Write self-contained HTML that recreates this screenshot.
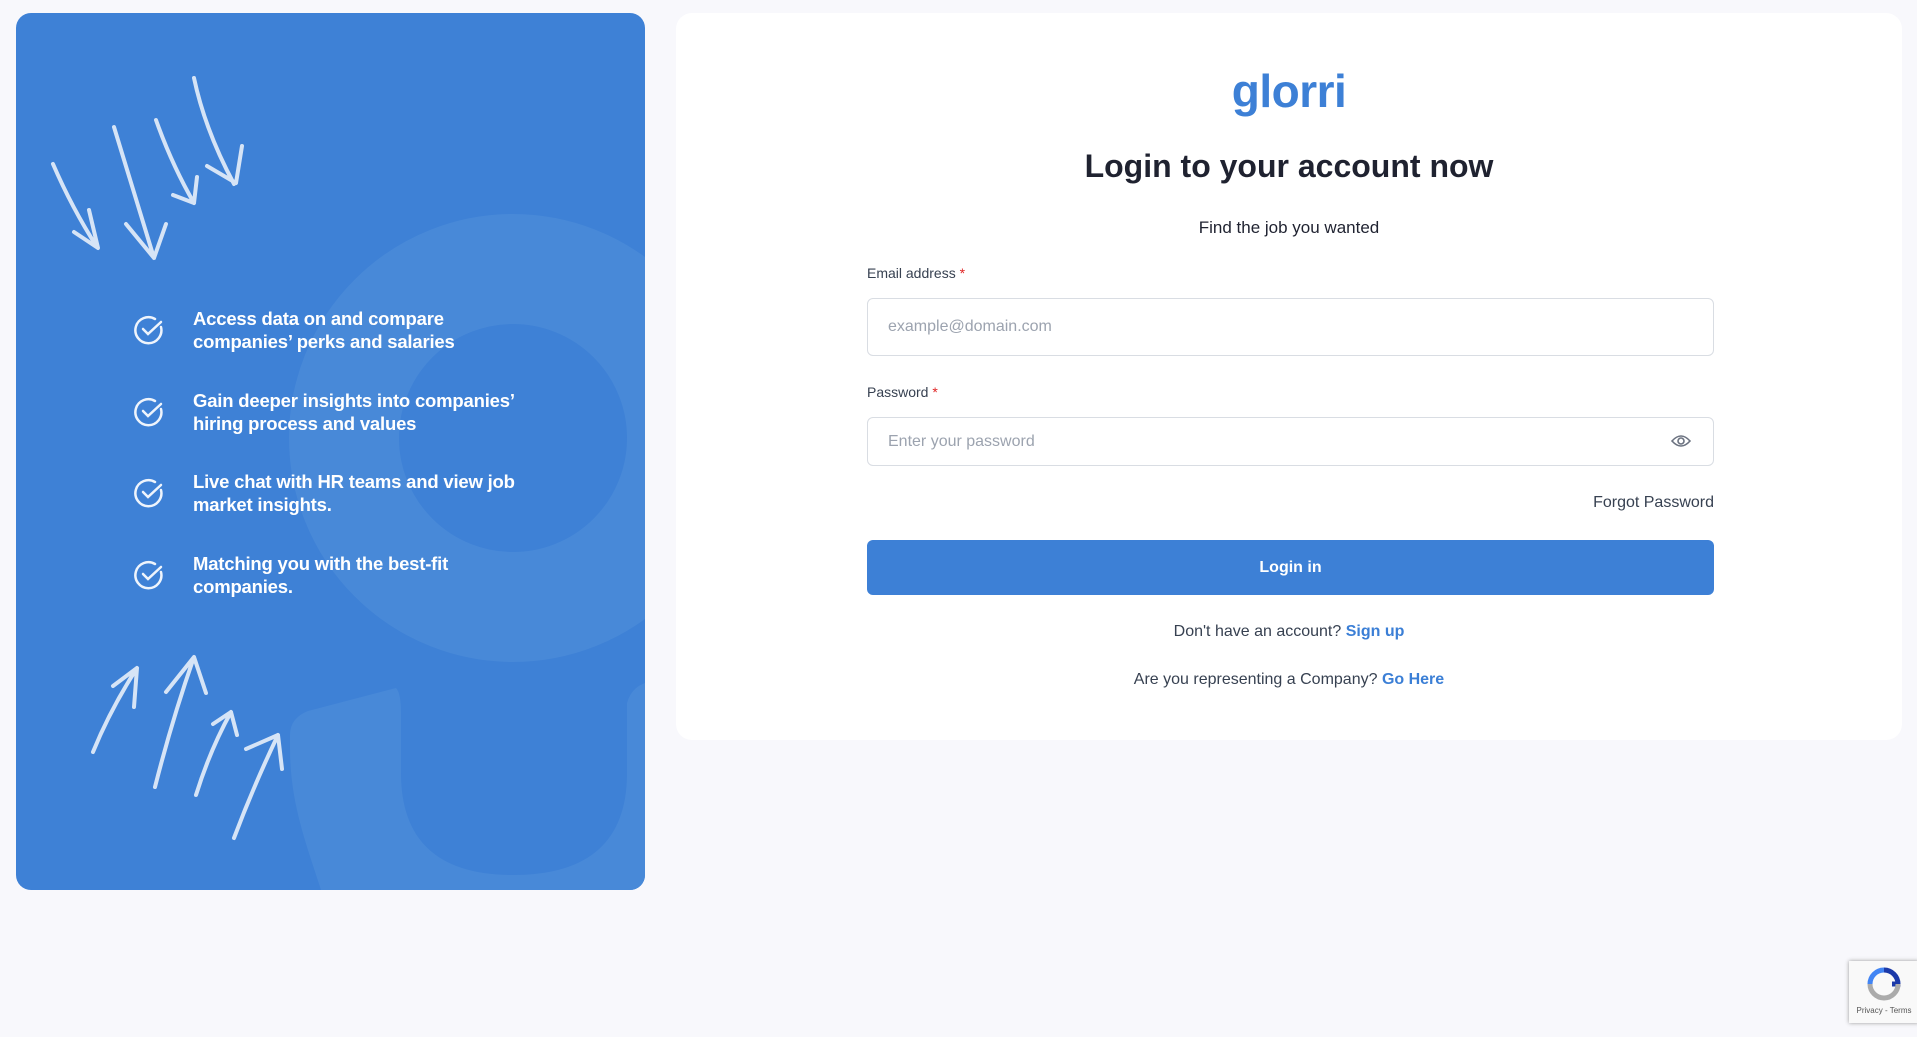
<!DOCTYPE html>
<html><head><meta charset="utf-8"><style>
*{box-sizing:border-box;margin:0;padding:0}
body{width:1917px;height:1037px;background:#f8f8fc;font-family:"Liberation Sans",sans-serif;position:relative;overflow:hidden}
.left{position:absolute;left:16px;top:13px;width:629px;height:877px;background:#3e81d6;border-radius:15px;overflow:hidden}
.item{position:absolute;left:117px;color:#fff;font-size:18.5px;font-weight:bold;line-height:23px;letter-spacing:-0.2px}
.item svg{position:absolute;left:0;top:7px}
.item div{position:absolute;left:60px;top:0;width:335px}
.card{position:absolute;left:676px;top:13px;width:1226px;height:727px;background:#fff;border-radius:16px}
.c{position:absolute;left:0;width:100%;text-align:center}
.lbl{position:absolute;left:191px;font-size:14px;color:#374151}
.lbl b{color:#e02424;font-weight:normal}
.inp{position:absolute;left:191px;width:847px;border:1px solid #d9dde3;border-radius:6px;color:#9ca3af;font-size:16px;padding-left:20px}
.btn{position:absolute;left:191px;top:527px;width:847px;height:55px;background:#3d80d6;border-radius:6px;color:#fff;font-weight:bold;font-size:16px;text-align:center;line-height:55px}
.t{font-size:16px;color:#374151}
.t a{color:#3b7fd6;font-weight:bold;text-decoration:none}
</style></head><body>
<div class="left">
<svg width="629" height="877" style="position:absolute;left:0;top:0">
<circle cx="497" cy="425" r="169" fill="none" stroke="#4889d8" stroke-width="110"/>
<path d="M305 877 C290 830 274 790 274 735 L274 722 Q274 705 292 698 L380 675 Q385 680 385 700 L385 760 Q385 862 497 862 Q611 862 611 760 L611 690 Q615 675 629 670 L629 877 Z" fill="#4889d8"/>
</svg>
<div class="item" style="top:294px"><svg width="32" height="32" viewBox="0 0 32 32" fill="none" stroke="#eef4fc" stroke-width="2.5" stroke-linecap="round"><path d="M28 13 A13 13 0 1 1 22 5"/><path d="M10 15 L15 20 L28 8"/></svg><div>Access data on and compare companies’ perks and salaries</div></div>
<div class="item" style="top:376px"><svg width="32" height="32" viewBox="0 0 32 32" fill="none" stroke="#eef4fc" stroke-width="2.5" stroke-linecap="round"><path d="M28 13 A13 13 0 1 1 22 5"/><path d="M10 15 L15 20 L28 8"/></svg><div>Gain deeper insights into companies’ hiring process and values</div></div>
<div class="item" style="top:457px"><svg width="32" height="32" viewBox="0 0 32 32" fill="none" stroke="#eef4fc" stroke-width="2.5" stroke-linecap="round"><path d="M28 13 A13 13 0 1 1 22 5"/><path d="M10 15 L15 20 L28 8"/></svg><div>Live chat with HR teams and view job market insights.</div></div>
<div class="item" style="top:539px"><svg width="32" height="32" viewBox="0 0 32 32" fill="none" stroke="#eef4fc" stroke-width="2.5" stroke-linecap="round"><path d="M28 13 A13 13 0 1 1 22 5"/><path d="M10 15 L15 20 L28 8"/></svg><div>Matching you with the best-fit companies.</div></div>
</div>
<svg width="400" height="900" style="position:absolute;left:0;top:0" fill="none" stroke="#d6e4f6" stroke-width="4" stroke-linecap="round" stroke-linejoin="round">
<path d="M53 164 Q72 208 97 247 M74 232 L98 248 L89 210"/>
<path d="M114 127 Q134 192 154 258 M126 224 L154 258 L166 224"/>
<path d="M156 120 Q172 165 194 203 M173 195 L194 203 L197 177"/>
<path d="M194 78 Q205 130 234 184 M207 166 L236 183 L242 146"/>
<path d="M93 752 Q110 710 137 668 M113 686 L137 668 L134 707"/>
<path d="M155 787 Q172 720 194 657 M166 692 L194 657 L206 693"/>
<path d="M196 795 Q210 750 231 712 M213 724 L231 712 L237 735"/>
<path d="M234 838 Q254 785 278 735 M246 749 L278 735 L282 769"/>
</svg>
<div class="card">
<div class="c" style="top:50px;font-size:46px;font-weight:bold;color:#3d80d6;letter-spacing:-0.5px;line-height:56px">glorri</div>
<div class="c" style="top:135px;font-size:32px;font-weight:bold;color:#1f2230">Login to your account now</div>
<div class="c" style="top:205px;font-size:17px;color:#1f2230">Find the job you wanted</div>
<div class="lbl" style="top:252px">Email address <b>*</b></div>
<div class="inp" style="top:285px;height:58px;line-height:56px">example@domain.com</div>
<div class="lbl" style="top:371px">Password <b>*</b></div>
<div class="inp" style="top:404px;height:49px;line-height:47px">Enter your password
<svg style="position:absolute;right:22px;top:15px" width="20" height="16" viewBox="0 0 20 16" fill="none" stroke="#6b7280" stroke-width="1.6"><path d="M1 8 Q10 -2 19 8 Q10 18 1 8Z"/><circle cx="10" cy="8" r="3"/></svg></div>
<div class="t" style="position:absolute;right:188px;top:481px">Forgot Password</div>
<div class="btn">Login in</div>
<div class="c t" style="top:610px">Don't have an account? <a>Sign up</a></div>
<div class="c t" style="top:658px">Are you representing a Company? <a>Go Here</a></div>
</div>
<div style="position:absolute;left:1849px;top:961px;width:70px;height:62px;background:#f9f9f9;box-shadow:0 0 4px #999;font-size:8px;color:#555;text-align:center">
<svg width="40" height="38" viewBox="0 0 40 38" style="margin-top:5px"><path d="M20 4 A14 14 0 0 1 34 18 L28 18" stroke="#1c3aa9" stroke-width="5" fill="none"/><path d="M6 18 A14 14 0 0 1 20 4" stroke="#4285f4" stroke-width="5" fill="none"/><path d="M6 18 A14 14 0 0 0 34 18" stroke="#ababab" stroke-width="5" fill="none"/></svg><div>Privacy - Terms</div></div>
</body></html>
